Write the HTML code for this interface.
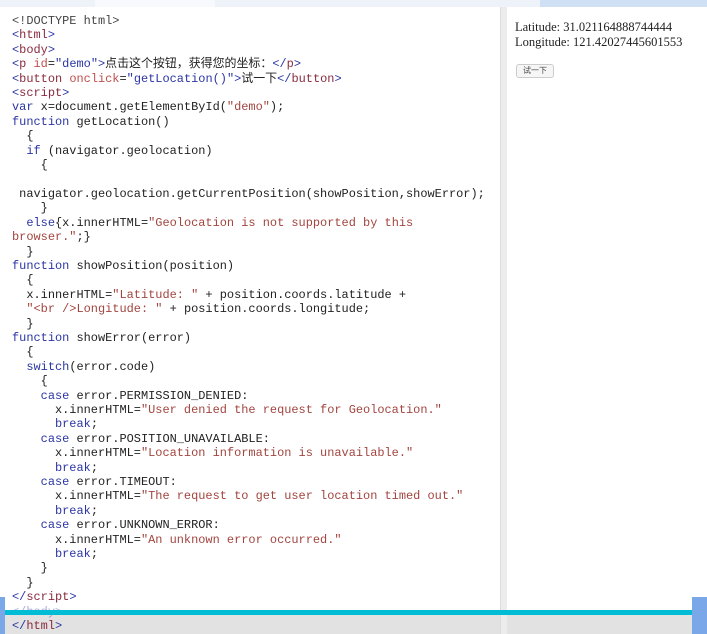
<!DOCTYPE html>
<html><head><meta charset="utf-8"><style>
body{margin:0;width:707px;height:634px;background:#fff;position:relative;overflow:hidden;font-family:"Liberation Sans","Noto Sans CJK SC",sans-serif}
.top{position:absolute;left:0;top:0;width:707px;height:7px;background:#eef3fa}
.top .a{position:absolute;left:95px;top:0;width:120px;height:7px;background:#f7f9fc}
.top .b{position:absolute;left:540px;top:0;width:167px;height:7px;background:#cfe0f5}
pre{position:absolute;left:12px;top:14px;margin:0;font-family:"Liberation Mono","Noto Sans CJK SC",monospace;font-size:11.95px;line-height:14.4px;color:#222}
.k{color:#2b36a3}.s{color:#a2453f}.t{color:#8a2b3e}.b{color:#2b36a3}.at{color:#c0504d}
.div{position:absolute;left:500px;top:7px;width:6px;height:627px;background:#ececec;border-left:1px solid #ddd}
.out{position:absolute;left:515px;top:20px;font-family:"Liberation Serif",serif;font-size:12.5px;line-height:15px;color:#222}
.btn{position:absolute;left:516px;top:64px;width:36px;height:12px;border:1px solid #ccc;border-radius:3px;background:#f6f6f6;font-size:8px;line-height:12px;text-align:center;color:#444}
.cy{position:absolute;left:0;top:610px;width:707px;height:5px;background:#00bcd4}
.gr{position:absolute;left:0;top:615px;width:707px;height:19px;background:#e2e2e2}
.lb{position:absolute;left:0;top:597px;width:5px;height:37px;background:#7aa7e8}
.rb{position:absolute;left:692px;top:597px;width:15px;height:37px;background:#7aa7e8}
</style></head><body>
<div class="top"><div class="a"></div><div class="b"></div></div>
<div class="gr"></div>
<pre><span style="color:#444">&lt;!DOCTYPE html&gt;</span>
<span class="b">&lt;</span><span class="t">html</span><span class="b">&gt;</span>
<span class="b">&lt;</span><span class="t">body</span><span class="b">&gt;</span>
<span class="b">&lt;</span><span class="t">p</span> <span class="at">id</span>=<span class="b">"demo"</span><span class="b">&gt;</span>点击这个按钮，获得您的坐标：<span class="b">&lt;/</span><span class="t">p</span><span class="b">&gt;</span>
<span class="b">&lt;</span><span class="t">button</span> <span class="at">onclick</span>=<span class="b">"getLocation()"</span><span class="b">&gt;</span>试一下<span class="b">&lt;/</span><span class="t">button</span><span class="b">&gt;</span>
<span class="b">&lt;</span><span class="t">script</span><span class="b">&gt;</span>
<span class="k">var</span> x=document.getElementById(<span class="s">"demo"</span>);
<span class="k">function</span> getLocation()
  {
  <span class="k">if</span> (navigator.geolocation)
    {

 navigator.geolocation.getCurrentPosition(showPosition,showError);
    }
  <span class="k">else</span>{x.innerHTML=<span class="s">"Geolocation is not supported by this</span>
<span class="s">browser."</span>;}
  }
<span class="k">function</span> showPosition(position)
  {
  x.innerHTML=<span class="s">"Latitude: "</span> + position.coords.latitude +
  <span class="s">"&lt;br /&gt;Longitude: "</span> + position.coords.longitude;
  }
<span class="k">function</span> showError(error)
  {
  <span class="k">switch</span>(error.code)
    {
    <span class="k">case</span> error.PERMISSION_DENIED:
      x.innerHTML=<span class="s">"User denied the request for Geolocation."</span>
      <span class="k">break</span>;
    <span class="k">case</span> error.POSITION_UNAVAILABLE:
      x.innerHTML=<span class="s">"Location information is unavailable."</span>
      <span class="k">break</span>;
    <span class="k">case</span> error.TIMEOUT:
      x.innerHTML=<span class="s">"The request to get user location timed out."</span>
      <span class="k">break</span>;
    <span class="k">case</span> error.UNKNOWN_ERROR:
      x.innerHTML=<span class="s">"An unknown error occurred."</span>
      <span class="k">break</span>;
    }
  }
<span class="b">&lt;/</span><span class="t">script</span><span class="b">&gt;</span>
<span class="b" style="opacity:.4">&lt;/body&gt;</span>
<span class="b">&lt;/</span><span class="t">html</span><span class="b">&gt;</span></pre>
<div class="div"></div>
<div class="out">Latitude: 31.021164888744444<br>Longitude: 121.42027445601553</div>
<div class="btn">试一下</div>
<div class="cy"></div>
<div class="lb"></div><div class="rb"></div>
</body></html>
